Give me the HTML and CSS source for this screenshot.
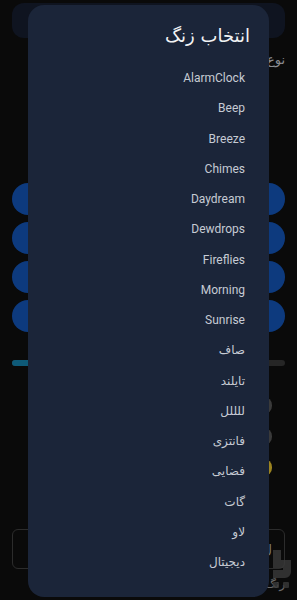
FILE: index.html
```html
<!DOCTYPE html>
<html lang="fa">
<head>
<meta charset="utf-8">
<link rel="stylesheet" href="styles.css">
</head>
<body>
<div class="app">
  <div class="topbar"></div>
  <div class="type-label">نوع</div>
  <div class="circle-rows">
    <div class="circle-row"><span class="circle"></span><span class="circle"></span></div>
    <div class="circle-row"><span class="circle"></span><span class="circle"></span></div>
    <div class="circle-row"><span class="circle"></span><span class="circle"></span></div>
    <div class="circle-row"><span class="circle"></span><span class="circle"></span></div>
  </div>
  <div class="slider"><div class="slider-fill"></div></div>
  <div class="switches">
    <span class="switch gray"></span>
    <span class="switch gray"></span>
    <span class="switch yellow"></span>
  </div>
  <div class="field"><span class="field-text">ل</span></div>
  <div class="color-label">رنگ</div>
  <div class="watermark">
    <svg width="26" height="44" viewBox="0 0 26 44">
      <path d="M4 2 h8 v10 h10 v12 a6 6 0 0 1 -6 6 h-12 v-8 h10 v-2 h-10 z" fill="#3a3a3a"/>
      <rect x="4" y="34" width="6" height="6" rx="1" fill="#3a3a3a"/>
      <rect x="14" y="34" width="6" height="6" rx="1" fill="#3a3a3a"/>
    </svg>
  </div>
</div>

<div class="dialog">
  <h1 class="dialog-title">انتخاب زنگ</h1>
  <ul class="tone-list">
    <li>AlarmClock</li>
    <li>Beep</li>
    <li>Breeze</li>
    <li>Chimes</li>
    <li>Daydream</li>
    <li>Dewdrops</li>
    <li>Fireflies</li>
    <li>Morning</li>
    <li>Sunrise</li>
    <li class="fa">صاف</li>
    <li class="fa">تایلند</li>
    <li class="fa">للللل</li>
    <li class="fa">فانتزی</li>
    <li class="fa">فضایی</li>
    <li class="fa">گات</li>
    <li class="fa">لاو</li>
    <li class="fa">دیجیتال</li>
  </ul>
</div>
</body>
</html>
```

FILE: styles.css
```css
html, body {
  margin: 0;
  padding: 0;
}
body {
  width: 297px;
  height: 600px;
  overflow: hidden;
  background: #0a0a0a;
  font-family: Roboto, "DejaVu Sans", sans-serif;
  position: relative;
}
.app {
  padding: 3px 12px 0 12px;
  display: flex;
  flex-direction: column;
}
.topbar {
  height: 35px;
  border-radius: 12px;
  background: #0f1420;
}
.type-label {
  direction: rtl;
  color: #8a8d92;
  font-size: 13px;
  font-family: "DejaVu Sans", sans-serif;
  margin-top: 12px;
  line-height: 20px;
}
.circle-rows {
  margin-top: 113px;
  display: flex;
  flex-direction: column;
  gap: 7px;
}
.circle-row {
  display: flex;
  justify-content: space-between;
}
.circle {
  width: 32px;
  height: 32px;
  border-radius: 50%;
  background: #0d3a7e;
}
.slider {
  margin-top: 28px;
  height: 6px;
  border-radius: 3px;
  background: #262626;
  overflow: hidden;
}
.slider-fill {
  width: 90px;
  height: 100%;
  background: #0e5a78;
}
.switches {
  margin-top: 31px;
  display: flex;
  flex-direction: column;
  align-items: flex-end;
  gap: 14px;
  padding-right: 13px;
}
.switch {
  width: 34px;
  height: 17px;
  border-radius: 8px;
}
.switch.gray { background: #3a3a3a; }
.switch.yellow { background: #9c8420; }
.field {
  margin-top: 53px;
  height: 38px;
  border: 1px solid #2c2c2c;
  border-radius: 6px;
  direction: rtl;
  display: flex;
  align-items: center;
  padding-right: 12px;
}
.field-text {
  color: #7d7d7d;
  font-size: 13px;
  font-family: "DejaVu Sans", sans-serif;
}
.color-label {
  direction: rtl;
  color: #6a6a6a;
  font-size: 12px;
  font-family: "DejaVu Sans", sans-serif;
  margin-top: 8px;
}
.watermark {
  position: absolute;
  right: 2px;
  bottom: 4px;
  opacity: 0.8;
}
.dialog {
  position: absolute;
  left: 28px;
  top: 5px;
  width: 241px;
  height: 592px;
  border-radius: 16px;
  background: #1b2539;
  direction: rtl;
  box-sizing: border-box;
  padding: 20px 24px 0 24px;
}
.dialog-title {
  margin: 0 -5px 0 0;
  font-family: "DejaVu Sans", sans-serif;
  font-weight: normal;
  font-size: 18px;
  line-height: 22px;
  color: #f2f3f5;
}
.tone-list {
  list-style: none;
  margin: 16px 0 0 0;
  padding: 0;
}
.tone-list li {
  height: 30.25px;
  line-height: 30.25px;
  font-size: 12px;
  color: #c6cbd4;
  font-family: Roboto, sans-serif;
}
.tone-list li.fa {
  font-family: "DejaVu Sans", sans-serif;
  font-size: 12px;
}
```
